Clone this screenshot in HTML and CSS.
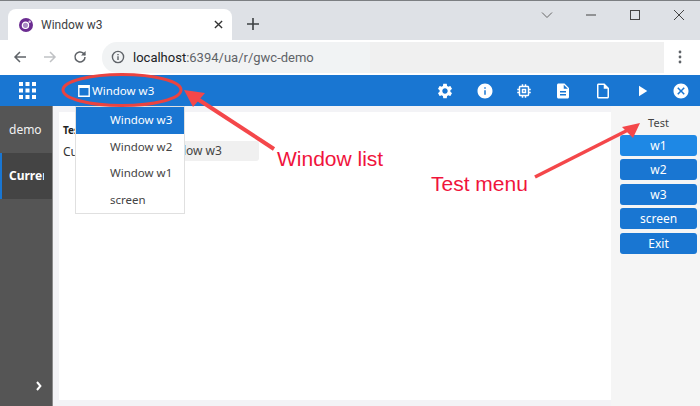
FILE: index.html
```html
<!DOCTYPE html>
<html lang="en">
<head>
<meta charset="utf-8">
<title>Window w3</title>
<link rel="stylesheet" href="styles.css">
</head>
<body>
<div class="page">
  <div class="tabstrip">
    <div class="tab">
      <svg class="favicon" viewBox="0 0 16 16"><circle cx="8" cy="8" r="8" fill="#6b2c91"/><circle cx="7.4" cy="8.4" r="3.8" fill="#a98bc4"/><circle cx="7.4" cy="8.4" r="3.6" fill="none" stroke="#fff" stroke-width="1.4"/><circle cx="12.2" cy="4.2" r="1.4" fill="#d9c6e6"/></svg>
      <span class="tab-title">Window w3</span>
      <svg class="tab-close" viewBox="0 0 10 10"><path d="M1 1l8 8M9 1l-8 8" stroke="#333" stroke-width="1.5" fill="none"/></svg>
    </div>
    <svg class="newtab" viewBox="0 0 12 12"><path d="M6 0v12M0 6h12" stroke="#3c4043" stroke-width="1.6" fill="none"/></svg>
    <div class="winctl">
      <svg class="winbtn" viewBox="0 0 12 12"><path d="M1 3.5l5 5 5-5" stroke="#666" fill="none"/></svg>
      <svg class="winbtn" viewBox="0 0 12 12"><path d="M1 6h10" stroke="#444" fill="none"/></svg>
      <svg class="winbtn" viewBox="0 0 12 12"><rect x="1.5" y="1.5" width="9" height="9" stroke="#444" fill="none"/></svg>
      <svg class="winbtn" viewBox="0 0 12 12"><path d="M1 1l10 10M11 1L1 11" stroke="#444" fill="none"/></svg>
    </div>
  </div>
  <div class="toolbar">
    <svg class="nav" viewBox="0 0 16 16"><path d="M14 8H3M8 3L3 8l5 5" stroke="#5f6368" stroke-width="1.5" fill="none"/></svg>
    <svg class="nav" viewBox="0 0 16 16"><path d="M2 8h11M8 3l5 5-5 5" stroke="#c0c2c5" stroke-width="1.5" fill="none"/></svg>
    <svg class="nav" viewBox="0 0 16 16"><path d="M13 8a5 5 0 1 1-1.5-3.6L13 6" stroke="#5f6368" stroke-width="1.5" fill="none"/><path d="M13.6 2v4.6H9z" fill="#5f6368"/></svg>
    <div class="omnibox">
      <svg class="siteinfo" viewBox="0 0 14 14"><circle cx="7" cy="7" r="5.6" stroke="#5f6368" stroke-width="1.4" fill="none"/><path d="M7 6.2v3.8M7 4v1.3" stroke="#5f6368" stroke-width="1.4"/></svg>
      <span class="url">localhost<span class="url-rest">:6394/ua/r/gwc-demo</span></span>
    </div>
    <div class="redacted"></div>
    <svg class="kebab" viewBox="0 0 4 14"><circle cx="2" cy="2" r="1.4" fill="#5f6368"/><circle cx="2" cy="7" r="1.4" fill="#5f6368"/><circle cx="2" cy="12" r="1.4" fill="#5f6368"/></svg>
  </div>
  <header class="appbar">
    <svg class="apps" viewBox="0 0 17 17" fill="#fff"><rect width="4" height="4"/><rect x="6.5" width="4" height="4"/><rect x="13" width="4" height="4"/><rect y="6.5" width="4" height="4"/><rect x="6.5" y="6.5" width="4" height="4"/><rect x="13" y="6.5" width="4" height="4"/><rect y="13" width="4" height="4"/><rect x="6.5" y="13" width="4" height="4"/><rect x="13" y="13" width="4" height="4"/></svg>
    <div class="current-win">
      <svg class="win-icon" viewBox="0 0 12 12"><path d="M.8.8h10.4v10.4H.8z" fill="none" stroke="#fff" stroke-width="1.4"/><path d="M1 1h10v2H1z" fill="#fff"/></svg>
      <span>Window w3</span>
    </div>
    <div class="actions">
      <span class="action"><svg viewBox="0 0 24 24"><path d="M19.14 12.94c.04-.3.06-.61.06-.94 0-.32-.02-.64-.07-.94l2.03-1.58c.18-.14.23-.41.12-.61l-1.92-3.32c-.12-.22-.37-.29-.59-.22l-2.39.96c-.5-.38-1.03-.7-1.62-.94l-.36-2.54c-.04-.24-.24-.41-.48-.41h-3.84c-.24 0-.43.17-.47.41l-.36 2.54c-.59.24-1.13.57-1.62.94l-2.39-.96c-.22-.08-.47 0-.59.22L2.74 8.87c-.12.21-.08.47.12.61l2.03 1.58c-.05.3-.09.63-.09.94s.02.64.07.94l-2.03 1.58c-.18.14-.23.41-.12.61l1.92 3.32c.12.22.37.29.59.22l2.39-.96c.5.38 1.03.7 1.62.94l.36 2.54c.05.24.24.41.48.41h3.84c.24 0 .44-.17.47-.41l.36-2.54c.59-.24 1.13-.56 1.62-.94l2.39.96c.22.08.47 0 .59-.22l1.92-3.32c.12-.22.07-.47-.12-.61l-2.01-1.58zM12 15.6c-1.98 0-3.6-1.62-3.6-3.6s1.62-3.6 3.6-3.6 3.6 1.62 3.6 3.6-1.62 3.6-3.6 3.6z"/></svg></span>
      <span class="action"><svg viewBox="0 0 24 24"><path d="M12 2C6.48 2 2 6.48 2 12s4.48 10 10 10 10-4.48 10-10S17.52 2 12 2zm1 15h-2v-6h2v6zm0-8h-2V7h2v2z"/></svg></span>
      <span class="action"><svg viewBox="0 0 24 24"><path d="M15 9H9v6h6V9zm-2 4h-2v-2h2v2zm8-2V9h-2V7c0-1.1-.9-2-2-2h-2V3h-2v2h-2V3H9v2H7c-1.1 0-2 .9-2 2v2H3v2h2v2H3v2h2v2c0 1.1.9 2 2 2h2v2h2v-2h2v2h2v-2h2c1.1 0 2-.9 2-2v-2h2v-2h-2v-2h2zm-4 6H7V7h10v10z"/></svg></span>
      <span class="action"><svg viewBox="0 0 24 24"><path d="M14 2H6c-1.1 0-1.99.9-1.99 2L4 20c0 1.1.89 2 1.99 2H18c1.1 0 2-.9 2-2V8l-6-6zm2 16H8v-2h8v2zm0-4H8v-2h8v2zm-3-5V3.5L18.5 9H13z"/></svg></span>
      <span class="action"><svg viewBox="0 0 24 24"><path d="M14 2H6c-1.1 0-1.99.9-1.99 2L4 20c0 1.1.89 2 1.99 2H18c1.1 0 2-.9 2-2V8l-6-6zM6 20V4h7v5h5v11H6z"/></svg></span>
      <span class="action"><svg viewBox="0 0 24 24"><path d="M8 5v14l11-7z"/></svg></span>
      <span class="action"><svg viewBox="0 0 24 24"><path d="M12 2C6.47 2 2 6.47 2 12s4.47 10 10 10 10-4.47 10-10S17.53 2 12 2zm5 13.59L15.59 17 12 13.41 8.41 17 7 15.59 10.59 12 7 8.41 8.41 7 12 10.59 15.59 7 17 8.41 13.41 12 17 15.59z"/></svg></span>
    </div>
  </header>
  <div class="workspace">
    <nav class="sidebar">
      <div class="side-item">demo</div>
      <div class="side-item is-current"><span class="side-clip">Current</span></div>
      <div class="side-spacer"></div>
      <svg class="expand" viewBox="0 0 6 10"><path d="M1 1l3.4 4L1 9" stroke="#fff" stroke-width="2" fill="none"/></svg>
    </nav>
    <main class="content">
      <div class="card">
        <div class="card-title">Test window</div>
        <div class="field">
          <span class="field-label">Current window:</span>
          <span class="field-value">Window w3</span>
        </div>
      </div>
    </main>
    <aside class="testmenu">
      <div class="testmenu-title">Test</div>
      <button class="tbtn is-hover">w1</button>
      <button class="tbtn">w2</button>
      <button class="tbtn">w3</button>
      <button class="tbtn">screen</button>
      <button class="tbtn">Exit</button>
    </aside>
  </div>
  <ul class="winmenu">
    <li class="winmenu-item is-active">Window w3</li>
    <li class="winmenu-item">Window w2</li>
    <li class="winmenu-item">Window w1</li>
    <li class="winmenu-item">screen</li>
  </ul>
  <svg class="marks" viewBox="0 0 700 406">
    <ellipse cx="122" cy="90" rx="59" ry="15.5" fill="none" stroke="#ea4340" stroke-width="3"/>
    <path d="M274 149L196 98" stroke="#f4474a" stroke-width="4" fill="none"/>
    <path d="M184 90l21 3-12 14z" fill="#f4474a"/>
    <path d="M535 177L628 130" stroke="#f4474a" stroke-width="3.6" fill="none"/>
    <path d="M640 123l-7 15-11-11z" fill="#f4474a"/>
  </svg>
  <span class="note note-list">Window list</span>
  <span class="note note-test">Test menu</span>
</div>
</body>
</html>
```
FILE: styles.css
```css
* { box-sizing: border-box; }
html, body { margin: 0; padding: 0; }
body { font-family: "Noto Sans", "Open Sans", sans-serif; background: #fff; }
.page {
  position: relative;
  width: 700px;
  height: 406px;
  overflow: hidden;
  display: flex;
  flex-direction: column;
}

/* browser tab strip */
.tabstrip {
  height: 40px;
  flex: none;
  background: #dee1e6;
  border-top: 1px solid #7c7f82;
  display: flex;
  align-items: flex-end;
  padding-left: 8px;
}
.tab {
  width: 224px;
  height: 31px;
  background: #fff;
  border-radius: 8px 8px 0 0;
  display: flex;
  align-items: center;
  padding: 0 9px 0 11px;
}
.favicon { width: 14px; height: 14px; flex: none; }
.tab-title { margin-left: 8px; font: 12px "Roboto", sans-serif; color: #3c4043; flex: 1; }
.tab-close { width: 9px; height: 9px; flex: none; }
.newtab { width: 12px; height: 12px; margin: 0 0 10px 15px; flex: none; }
.winctl {
  margin-left: auto;
  align-self: flex-start;
  display: flex;
  margin-top: 8px;
  margin-right: 15px;
  gap: 32px;
}
.winbtn { width: 12px; height: 12px; flex: none; }

/* browser toolbar */
.toolbar {
  height: 35px;
  flex: none;
  background: #fff;
  display: flex;
  align-items: center;
  padding: 0 0 1px 12px;
}
.nav { width: 16px; height: 16px; margin-right: 14px; flex: none; }
.omnibox {
  width: 268px;
  height: 31px;
  background: #f1f3f4;
  border-radius: 15px 0 0 15px;
  display: flex;
  align-items: center;
  padding-left: 9px;
  flex: none;
}
.siteinfo { width: 14px; height: 14px; flex: none; }
.url { margin-left: 8px; font: 13px "Roboto", sans-serif; color: #202124; white-space: nowrap; }
.url-rest { color: #5f6368; }
.redacted { width: 294px; height: 31px; background: #f0f0f0; flex: none; }
.kebab { width: 4px; height: 14px; margin-left: 14px; flex: none; }

/* app bar */
.appbar {
  height: 31px;
  flex: none;
  background: #1976d2;
  display: flex;
  align-items: center;
  padding-left: 19px;
}
.apps { width: 17px; height: 17px; flex: none; }
.current-win {
  display: flex;
  align-items: center;
  margin-left: 42px;
  color: #fff;
  font-size: 11.5px;
  gap: 2px;
}
.win-icon { width: 12px; height: 12px; flex: none; }
.actions { margin-left: auto; margin-right: -1px; display: flex; }
.action {
  width: 39.33px;
  display: flex;
  justify-content: center;
}
.action svg { width: 18px; height: 18px; fill: #fff; }

/* workspace */
.workspace { flex: 1; display: flex; min-height: 0; }
.sidebar {
  width: 53px;
  flex: none;
  background: #555;
  border-right: 1px solid #8c8c8c;
  display: flex;
  flex-direction: column;
  color: #f2f2f2;
  font-size: 12px;
}
.side-item {
  height: 46.5px;
  flex: none;
  padding-left: 9px;
  display: flex;
  align-items: center;
}
.side-item.is-current {
  background: #444;
  border-left: 2px solid #1976d2;
  padding-left: 7px;
  font-weight: 700;
  color: #fff;
}
.side-clip { display: block; width: 35px; overflow: hidden; white-space: nowrap; }
.side-spacer { flex: 1; }
.expand { width: 6px; height: 10px; margin: 0 0 15px 36px; flex: none; }
.content {
  flex: 1;
  background: #f3f3f6;
  padding: 6px 0 6px 6px;
  display: flex;
}
.card {
  flex: 1;
  background: #fff;
  padding: 11px 4px 0;
  color: #333;
}
.card-title { font-size: 10px; font-weight: 700; line-height: 14px; color: #222; }
.field { display: flex; align-items: center; margin-top: 4px; height: 20px; font-size: 12px; white-space: nowrap; }
.field-label { width: 94px; flex: none; overflow: hidden; }
.field-value {
  width: 102px;
  height: 20px;
  line-height: 20px;
  background: #f0f0f0;
  border-radius: 3px;
  color: #444;
  font-size: 12px;
}
.testmenu {
  width: 89px;
  flex: none;
  background: #f5f5f5;
  padding: 9px 3px 0 9px;
  display: flex;
  flex-direction: column;
  gap: 3.5px;
}
.testmenu-title { text-align: center; font-size: 11px; line-height: 16px; color: #444; height: 16px; }
.tbtn {
  height: 21px;
  padding: 0;
  border: none;
  border-radius: 3px;
  background: #1976d2;
  color: #fff;
  font: 12px "Noto Sans", sans-serif;
}
.tbtn.is-hover { background: #1e88e5; }

/* window dropdown */
.winmenu {
  position: absolute;
  left: 75px;
  top: 106px;
  width: 110px;
  margin: 0;
  padding: 0;
  list-style: none;
  background: #fff;
  border: 1px solid #e0e0e0;
  font-size: 11.5px;
  color: #444;
}
.winmenu-item { height: 26.5px; line-height: 26px; padding-left: 34px; }
.winmenu-item.is-active { background: #1976d2; color: #fff; }

/* annotations over the screenshot */
.marks { position: absolute; left: 0; top: 0; width: 700px; height: 406px; pointer-events: none; }
.note {
  position: absolute;
  font: 21px "Liberation Sans", sans-serif;
  color: #f0143c;
  white-space: nowrap;
}
.note-list { left: 277px; top: 147px; }
.note-test { left: 431px; top: 172px; }
```
